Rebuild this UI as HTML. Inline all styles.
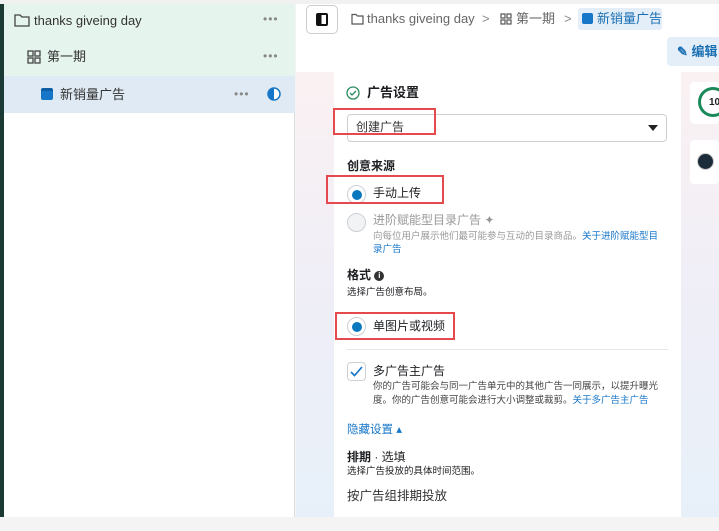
<!DOCTYPE html>
<html><head><meta charset="utf-8"><style>
*{margin:0;padding:0;box-sizing:border-box}
body{width:719px;height:531px;overflow:hidden;background:#f4f4f5;font-family:"Liberation Sans","Noto Sans CJK SC",sans-serif;position:relative;color:#1c1e21;line-height:1.32}
.abs{position:absolute}
.side{left:0;top:4px;width:295px;height:513px;background:#fff;border-right:1px solid #dcdcdc}
.row{position:absolute;left:4px;width:291px;font-size:13px;color:#333;display:flex;align-items:center}
.dots{position:absolute;color:#888;font-size:12px;letter-spacing:1px}
.red{position:absolute;border:2.5px solid #e5484d}
.t{position:absolute;white-space:nowrap}
.radio{position:absolute;width:19px;height:19px;border:1px solid #ccd0d5;border-radius:50%;background:#fff}
.radio.on::after{content:"";position:absolute;left:4px;top:4px;width:10px;height:10px;border-radius:50%;background:#0a78be}
.blue{color:#1877c9}
</style></head><body>
<div class="abs" style="left:0;top:0;width:719px;height:4px;background:#f1f1f1"></div>
<div class="abs side"></div>
<div class="abs" style="left:0;top:4px;width:4px;height:513px;background:#1b3a33"></div>
<div class="row" style="top:4px;height:34px;background:#e6f4ee">
<svg class="abs" style="left:10px;top:9px" width="16" height="14" viewBox="0 0 16 14"><path d="M1 2h5l2 2h7v9H1z" fill="none" stroke="#444" stroke-width="1.3"/></svg>
<span class="t" style="left:30px;top:8px">thanks giveing day</span><span class="dots" style="left:259px;top:8px">•••</span></div>
<div class="row" style="top:38px;height:38px;background:#e6f4ee">
<svg class="abs" style="left:23px;top:12px" width="14" height="14" viewBox="0 0 14 14"><g fill="none" stroke="#444" stroke-width="1.3"><rect x="1" y="1" width="5" height="5"/><rect x="8" y="1" width="5" height="5"/><rect x="1" y="8" width="5" height="5"/><rect x="8" y="8" width="5" height="5"/></g></svg>
<span class="t" style="left:43px;top:10px">第一期</span><span class="dots" style="left:259px;top:11px">•••</span></div>
<div class="row" style="top:76px;height:37px;background:#dfeaf4">
<div class="abs" style="left:37px;top:12px;width:12px;height:12px;background:#1677c8;border-radius:2px;border-top:3px solid #0f5ea3"></div>
<span class="t" style="left:56px;top:10px">新销量广告</span><span class="dots" style="left:230px;top:11px">•••</span>
<svg class="abs" style="left:263px;top:11px" width="14" height="14" viewBox="0 0 14 14"><circle cx="7" cy="7" r="6" fill="#fff" stroke="#1677c8" stroke-width="1.5"/><path d="M7 1a6 6 0 0 0 0 12z" fill="#1677c8"/></svg></div>

<div class="abs" style="left:296px;top:4px;width:423px;height:68px;background:#fff"></div>
<div class="abs" style="left:306px;top:5px;width:32px;height:29px;border:1px solid #ccc;border-radius:5px"><div class="abs" style="left:9px;top:7px;width:12px;height:13px;border:2px solid #111;border-radius:2px;background:linear-gradient(90deg,#111 45%,#fff 45%)"></div></div>
<svg class="abs" style="left:351px;top:13px" width="13" height="12" viewBox="0 0 13 12"><path d="M1 1.5h4l1.5 1.5h5.5v8h-11z" fill="none" stroke="#555" stroke-width="1.2"/></svg>
<span class="t" style="left:367px;top:10px;font-size:13px;color:#666">thanks giveing day</span>
<span class="t" style="left:482px;top:10px;font-size:13px;color:#888">&gt;</span>
<svg class="abs" style="left:500px;top:13px" width="12" height="12" viewBox="0 0 12 12"><g fill="none" stroke="#555" stroke-width="1.2"><rect x="1" y="1" width="4" height="4"/><rect x="7" y="1" width="4" height="4"/><rect x="1" y="7" width="4" height="4"/><rect x="7" y="7" width="4" height="4"/></g></svg>
<span class="t" style="left:516px;top:10px;font-size:13px;color:#666">第一期</span>
<span class="t" style="left:564px;top:10px;font-size:13px;color:#888">&gt;</span>
<div class="abs" style="left:578px;top:8px;width:84px;height:22px;background:#e3eef8;border-radius:3px"></div>
<div class="abs" style="left:582px;top:13px;width:11px;height:11px;background:#1677c8;border-radius:2px"></div>
<span class="t" style="left:597px;top:10px;font-size:13px;color:#1a6fb3">新销量广告</span>
<div class="abs" style="left:667px;top:37px;width:60px;height:29px;background:#e3eef8;border-radius:4px"></div>
<span class="t" style="left:677px;top:43px;font-size:13px;color:#1a6fb3;font-weight:bold">✎ 编辑</span>

<div class="abs" style="left:296px;top:72px;width:423px;height:445px;background:linear-gradient(180deg,#faf1f2 0%,#efeef7 50%,#e7f0f9 100%)"></div>
<div class="abs" style="left:690px;top:82px;width:29px;height:42px;background:#fff;border-radius:4px"></div>
<div class="abs" style="left:698px;top:87px;width:30px;height:30px;border:3px solid #1a8a5a;border-radius:50%;border-right-color:transparent"></div>
<span class="t" style="left:709px;top:96px;font-size:10px;font-weight:bold">10</span>
<div class="abs" style="left:690px;top:140px;width:29px;height:44px;background:#fff;border-radius:4px"></div>
<div class="abs" style="left:698px;top:154px;width:15px;height:15px;border-radius:50%;background:#1c2b3a;box-shadow:0 0 0 1px #ccc"></div>

<div class="abs" style="left:334px;top:72px;width:347px;height:445px;background:#fff"></div>
<svg class="abs" style="left:346px;top:86px" width="14" height="14" viewBox="0 0 14 14"><circle cx="7" cy="7" r="6" fill="none" stroke="#2b8a5e" stroke-width="1.3"/><path d="M4 7l2 2 4-4" fill="none" stroke="#2b8a5e" stroke-width="1.3"/></svg>
<span class="t" style="left:367px;top:84px;font-size:13px;font-weight:bold">广告设置</span>
<div class="abs" style="left:347px;top:114px;width:320px;height:28px;border:1px solid #ccd0d5;border-radius:4px"></div>
<span class="t" style="left:356px;top:120px;font-size:12px;color:#333">创建广告</span>
<div class="abs" style="left:648px;top:125px;border-left:5px solid transparent;border-right:5px solid transparent;border-top:6px solid #222"></div>
<div class="red" style="left:333px;top:108px;width:103px;height:27px"></div>
<span class="t" style="left:347px;top:159px;font-size:12px;font-weight:bold">创意来源</span>
<div class="radio on" style="left:347px;top:185px"></div>
<span class="t" style="left:373px;top:186px;font-size:12px">手动上传</span>
<div class="red" style="left:326px;top:175px;width:118px;height:29px"></div>
<div class="radio" style="left:347px;top:213px;background:#f2f3f5"></div>
<span class="t" style="left:373px;top:213px;font-size:12px;color:#999">进阶赋能型目录广告 ✦</span>
<span class="t" style="left:373px;top:231px;font-size:9.5px;color:#999">向每位用户展示他们最可能参与互动的目录商品。<span class="blue">关于进阶赋能型目</span></span>
<span class="t blue" style="left:373px;top:244px;font-size:9.5px">录广告</span>
<span class="t" style="left:347px;top:268px;font-size:12px;font-weight:bold">格式 <span style="display:inline-block;width:10px;height:10px;border-radius:50%;background:#333;color:#fff;font-size:8px;text-align:center;line-height:10px;vertical-align:1px">i</span></span>
<span class="t" style="left:347px;top:287px;font-size:9.5px">选择广告创意布局。</span>
<div class="radio on" style="left:347px;top:317px"></div>
<span class="t" style="left:373px;top:319px;font-size:12px">单图片或视频</span>
<div class="red" style="left:335px;top:312px;width:120px;height:28px"></div>
<div class="abs" style="left:347px;top:349px;width:321px;height:1px;background:#e4e6eb"></div>
<div class="abs" style="left:347px;top:362px;width:19px;height:19px;border:1px solid #ccd0d5;border-radius:4px"></div>
<svg class="abs" style="left:350px;top:366px" width="13" height="11" viewBox="0 0 13 11"><path d="M1 6l3.5 3.5L12 1" fill="none" stroke="#1877c9" stroke-width="1.7"/></svg>
<span class="t" style="left:373px;top:364px;font-size:12px">多广告主广告</span>
<span class="t" style="left:373px;top:381px;font-size:9.5px;color:#444">你的广告可能会与同一广告单元中的其他广告一同展示，以提升曝光</span>
<span class="t" style="left:373px;top:395px;font-size:9.5px;color:#444">度。你的广告创意可能会进行大小调整或裁剪。<span class="blue">关于多广告主广告</span></span>
<span class="t blue" style="left:347px;top:423px;font-size:11.5px">隐藏设置 ▴</span>
<span class="t" style="left:347px;top:450px;font-size:12px"><b>排期</b> · 选填</span>
<span class="t" style="left:347px;top:466px;font-size:9.5px">选择广告投放的具体时间范围。</span>
<span class="t" style="left:347px;top:488px;font-size:12.5px;color:#333">按广告组排期投放</span>
</body></html>
